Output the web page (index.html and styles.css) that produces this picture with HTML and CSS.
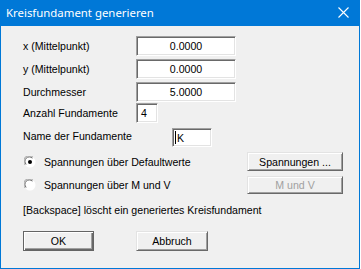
FILE: index.html
```html
<!DOCTYPE html>
<html>
<head>
<meta charset="utf-8">
<link rel="stylesheet" href="styles.css">
</head>
<body>
<div class="window">
  <div class="titlebar">
    <span class="title">Kreisfundament generieren</span>
    <svg class="close" width="11" height="11" viewBox="0 0 11 11"><path d="M0.5 0.5 L10.5 10.5 M10.5 0.5 L0.5 10.5" stroke="#fff" stroke-width="1.1" fill="none"/></svg>
  </div>
  <div class="content">
    <div class="row r1"><span class="label">x (Mittelpunkt)</span><div class="field wide">0.0000</div></div>
    <div class="row r2"><span class="label">y (Mittelpunkt)</span><div class="field wide">0.0000</div></div>
    <div class="row r3"><span class="label">Durchmesser</span><div class="field wide">5.0000</div></div>
    <div class="row r4"><span class="label">Anzahl Fundamente</span><div class="field small">4</div></div>
    <div class="row r5"><span class="label label-long">Name der Fundamente</span><div class="field name"><span class="caret"></span>K</div></div>
    <div class="row radio-row rr1">
      <svg class="radio" width="12" height="12" viewBox="0 0 12 12">
        <circle cx="6" cy="6" r="5.5" fill="#fff"/>
        <path d="M1.2 9 A5 5 0 0 1 9 1.2" stroke="#a0a0a0" fill="none"/>
        <path d="M2.2 8.4 A4 4 0 0 1 8.4 2.2" stroke="#696969" fill="none"/>
        <circle cx="6" cy="6" r="2" fill="#000"/>
      </svg>
      <span class="radio-text">Spannungen über Defaultwerte</span>
      <div class="btn side">Spannungen ...</div>
    </div>
    <div class="row radio-row rr2">
      <svg class="radio" width="12" height="12" viewBox="0 0 12 12">
        <circle cx="6" cy="6" r="5.5" fill="#fff"/>
        <path d="M1.2 9 A5 5 0 0 1 9 1.2" stroke="#a0a0a0" fill="none"/>
        <path d="M2.2 8.4 A4 4 0 0 1 8.4 2.2" stroke="#696969" fill="none"/>
      </svg>
      <span class="radio-text">Spannungen über M und V</span>
      <div class="btn side disabled">M und V</div>
    </div>
    <div class="row note">[Backspace] löscht ein generiertes Kreisfundament</div>
    <div class="row actions">
      <div class="btn ok default">OK</div>
      <div class="btn cancel">Abbruch</div>
    </div>
  </div>
</div>
</body>
</html>
```
FILE: styles.css
```css
html, body {
  margin: 0;
  padding: 0;
  background: #ffffff;
}
.window {
  box-sizing: border-box;
  width: 360px;
  height: 269px;
  background: #f0f0f0;
  border: 1px solid #0078d7;
  border-top: none;
  font-family: "Liberation Sans", Arial, sans-serif;
  font-size: 10.6px;
  color: #000;
}
.titlebar {
  height: 26px;
  margin: 0 -1px;
  background: #0078d7;
  display: flex;
  align-items: center;
  color: #fff;
}
.title {
  font-family: "Noto Sans", sans-serif;
  font-size: 11.4px;
  margin-left: 6px;
  margin-top: -1px;
}
.close {
  margin-left: auto;
  margin-right: 11px;
  margin-top: -1px;
}
.content {
  padding: 10px 16px 0 21px;
  display: flex;
  flex-direction: column;
}
.row {
  display: flex;
  align-items: center;
}
.label {
  width: 114px;
  flex: none;
  padding-left: 1px;
  box-sizing: border-box;
  margin-top: -1px;
}
.label-long {
  width: 150px;
  margin-top: -3px;
}
.r1 { height: 20px; }
.r2 { height: 20px; margin-top: 3px; }
.r3 { height: 20px; margin-top: 3px; }
.r4 { height: 20px; margin-top: 1px; }
.r5 { height: 19px; margin-top: 5px; }
.field {
  box-sizing: border-box;
  height: 100%;
  background: #fff;
  border-style: solid;
  border-width: 1px;
  border-color: #a0a0a0 #ffffff #ffffff #a0a0a0;
  box-shadow: inset 1px 1px 0 #696969, inset -1px -1px 0 #e3e3e3;
  display: flex;
  align-items: center;
}
.wide {
  width: 100px;
  justify-content: center;
}
.small {
  width: 22px;
  padding-left: 4px;
}
.name {
  width: 40px;
  padding-left: 2px;
}
.caret {
  width: 1px;
  height: 13px;
  background: #000;
  margin-right: 1px;
}
.radio-row {
  height: 19px;
}
.rr1 { margin-top: 5px; }
.rr2 { margin-top: 5px; height: 18px; }
.radio {
  flex: none;
  margin-left: 2px;
}
.radio-text {
  margin-left: 8px;
}
.btn {
  box-sizing: border-box;
  background: #f0f0f0;
  border-style: solid;
  border-width: 1px;
  border-color: #e3e3e3 #696969 #696969 #e3e3e3;
  box-shadow: inset 1px 1px 0 #ffffff, inset -1px -1px 0 #a0a0a0;
  display: flex;
  align-items: center;
  justify-content: center;
  height: 100%;
}
.side {
  margin-left: auto;
  width: 96px;
}
.disabled {
  color: #a0a0a0;
}
.note {
  height: 20px;
  margin-top: 6px;
  padding-left: 1px;
}
.actions {
  height: 20px;
  margin-top: 11px;
  padding-left: 1px;
}
.ok {
  width: 71px;
}
.default {
  border: 1px solid #646464;
  box-shadow: inset 1px 1px 0 #ffffff, inset -1px -1px 0 #696969, inset -2px -2px 0 #a0a0a0;
}
.cancel {
  width: 72px;
  margin-left: 42px;
}
```
